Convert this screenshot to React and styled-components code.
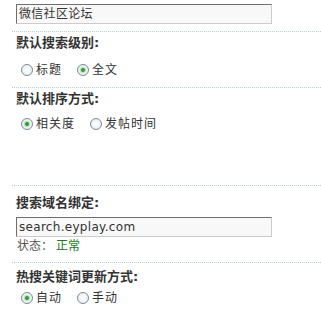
import React from 'react';
import styled, { createGlobalStyle } from 'styled-components';

const GlobalStyle = createGlobalStyle`
    body {
        margin: 0;
        background: #ffffff;
        font-family: "DejaVu Sans", "Noto Sans CJK SC", sans-serif;
        color: #333333;
    }
`;

const sections = [
    {
        title: '默认搜索级别:',
        name: 'level',
        options: ['标题', '全文'],
        checked: 1,
    },
    {
        title: '默认排序方式:',
        name: 'order',
        options: ['相关度', '发帖时间'],
        checked: 0,
    },
];

function Radio({ label, checked }) {
    return (
        <Option>
            <Dot $checked={checked} />
            <span>{label}</span>
        </Option>
    );
}

function App() {
    return (
        <Page>
            <GlobalStyle />
            <Block $top={4} $bottom={7} $plain>
                <TextBox>微信社区论坛</TextBox>
            </Block>
            <Block $top={3} $bottom={9}>
                <Title>{sections[0].title}</Title>
                <Options $gap={11}>
                    {sections[0].options.map((o, i) => (
                        <Radio key={o} label={o} checked={i === sections[0].checked} />
                    ))}
                </Options>
            </Block>
            <Block $top={3} $bottom={53}>
                <Title>{sections[1].title}</Title>
                <Options $gap={9}>
                    {sections[1].options.map((o, i) => (
                        <Radio key={o} label={o} checked={i === sections[1].checked} />
                    ))}
                </Options>
            </Block>
            <Block $top={9} $bottom={8}>
                <Title>搜索域名绑定:</Title>
                <TextBox $mt={6}>search.eyplay.com</TextBox>
                <Status>
                    状态：<Ok>正常</Ok>
                </Status>
            </Block>
            <Block $top={6} $bottom={10}>
                <Title>热搜关键词更新方式:</Title>
                <Options $gap={5}>
                    <Radio label="自动" checked />
                    <Radio label="手动" />
                </Options>
            </Block>
        </Page>
    );
}

export default App;

const Page = styled.div`
    width: 321px;
    height: 318px;
    overflow: hidden;
    padding-left: 12px;
    box-sizing: border-box;
`;

const Block = styled.div`
    border-top: ${props => (props.$plain ? 'none' : '1px dotted #b9ccd4')};
    padding: ${props => props.$top}px 0 ${props => props.$bottom}px 4px;
    display: flex;
    flex-direction: column;
    align-items: flex-start;
`;

const TextBox = styled.div`
    width: 256px;
    height: 20px;
    box-sizing: border-box;
    margin-top: ${props => props.$mt || 0}px;
    border: 1px solid #cccccc;
    border-top-color: #6f6f6f;
    border-left-color: #6f6f6f;
    background: #f8f8f8;
    padding: 0 2px;
    font-size: 12px;
    line-height: 18px;
    color: #333333;
    letter-spacing: 0.3px;
`;

const Title = styled.div`
    font-size: 13px;
    line-height: 16px;
    font-weight: bold;
    color: #333333;
`;

const Options = styled.div`
    display: flex;
    align-items: center;
    margin-top: ${props => props.$gap}px;
    padding-left: 5px;
    gap: 15px;
`;

const Option = styled.label`
    display: flex;
    align-items: center;
    gap: 3px;
    font-size: 12px;
    line-height: 16px;
    color: #333333;
    letter-spacing: 1px;
`;

const Dot = styled.span`
    width: 12px;
    height: 12px;
    box-sizing: border-box;
    border-radius: 50%;
    border: 1px solid #7a8a99;
    background: radial-gradient(circle at 50% 50%, #ffffff 0%, #eef0f2 70%, #d8dce0 100%);
    display: flex;
    align-items: center;
    justify-content: center;
    &::after {
        content: '';
        width: 4px;
        height: 4px;
        border-radius: 50%;
        background: ${props => (props.$checked ? '#2f9e2f' : 'transparent')};
        box-shadow: ${props => (props.$checked ? '0 0 1px 1px rgba(80, 180, 80, 0.4)' : 'none')};
    }
`;

const Status = styled.div`
    margin-top: 1px;
    font-size: 12px;
    line-height: 16px;
    color: #555555;
    padding-left: 1px;
`;

const Ok = styled.span`
    color: #1a7a1a;
    margin-left: 3px;
`;
